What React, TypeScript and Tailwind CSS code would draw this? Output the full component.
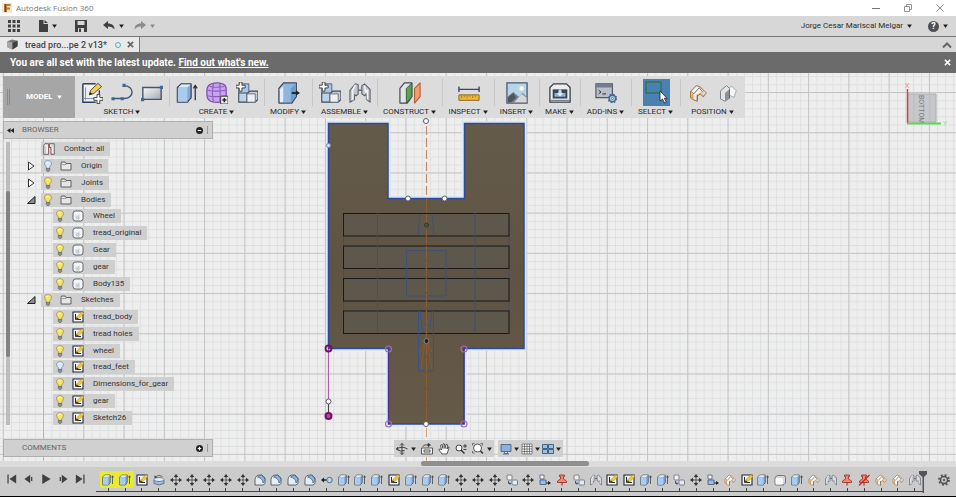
import React from "react";

type IconProps = { className?: string };

const blue = "#a9c8e8";
const ink = "#3f4a59";

const Caret = ({ className = "text-[#222]" }: IconProps) => (
  <svg viewBox="0 0 6 5" className={`h-1 w-[5px] shrink-0 ${className}`}>
    <path d="M0 0.5h6L3 5z" fill="currentColor" />
  </svg>
);

/* SHARED FEATURE ICONS */
const Extrude = ({ className }: IconProps) => (
  <svg viewBox="0 0 24 24" className={className} strokeLinejoin="round">
    <path d="M1.500 6 5.500 2h11v15l-4 5h-11z" fill="#7fa9d6" stroke={ink} strokeWidth="1.400" />
    <path d="M2 6.500h10.500v15H2z" fill="#a9cbec" />
    <path d="M2.500 6 5.800 2.700h10L12.500 6z" fill="#dcebf8" />
    <path d="M21 20V4M19 7l2-3.500L23 7" fill="none" stroke="#333" strokeWidth="1.400" />
  </svg>
);

const SketchSmall = ({ className }: IconProps) => (
  <svg viewBox="0 0 24 24" className={className}>
    <path d="M2 2h20v20H2z" fill="#f4f4f2" stroke="#1f2937" strokeWidth="2.200" />
    <path d="M7 6v11h11" fill="none" stroke="#1f2937" strokeWidth="2" />
    <path d="m8 17 2-6 10-10 4 4-10 10z" fill="#f0c93a" stroke="#8d6d1c" strokeWidth=".8" />
    <path d="m8 17 1.500-4.500 3 3z" fill="#222" />
  </svg>
);

const SketchBig = ({ className }: IconProps) => (
  <svg viewBox="0 0 24 24" className={className}>
    <path d="M3 3h18v18H3z" fill="#f1f1f1" />
    <path d="M2 2v20h14M2 2h14M20 9v4" fill="none" stroke="#34455c" strokeWidth="1.600" />
    <path d="M5 20V6M3 18h11" stroke="#7b8ba3" strokeWidth="1" />
    <path d="m9 14 1.500-5L18.500 1.500l4 3.500-8.500 7.500z" fill="#f2cf58" stroke="#4a4332" />
    <path d="m9 14 1-3 2.500 2z" fill="#222" />
    <path d="M17.500 13.500h3v3.500h3.500v3h-3.500v3.500h-3V20H14v-3h3.500z" fill="#fff" stroke="#333" />
  </svg>
);

const Polyline = ({ className }: IconProps) => (
  <svg viewBox="0 0 24 24" className={className}>
    <path d="M2 18h12M14 4c12 0 12 14 0 14" fill="none" stroke="#3c5478" strokeWidth="1.500" />
    <path d="M0.500 16.500H4V20H.5zM10.500 16.500H14V20h-3.500zM12.500 2H16v3.500h-3.500z" fill="#416798" />
  </svg>
);

const Rectangle = ({ className }: IconProps) => (
  <svg viewBox="0 0 24 24" className={className}>
    <defs>
      <linearGradient id="rectFill" x1="0" y1="0" x2="1" y2="1">
        <stop offset="0" stopColor="#fafafa" />
        <stop offset="1" stopColor="#a3a9b1" />
      </linearGradient>
    </defs>
    <path d="M2 6h20v13H2z" fill="url(#rectFill)" stroke="#44546c" strokeWidth="1.500" />
    <path d="M0 17.500h3.500V21H0zM20.500 4H24v3.500h-3.500z" fill="#416798" />
  </svg>
);

const Form = ({ className }: IconProps) => (
  <svg viewBox="0 0 24 24" className={className}>
    <path d="M6 2q6-2 12 0 4 1 4 6v8q-1 5-6 6-6 1-11-1-4-2-4-7V8q1-5 5-6z" fill="#c9a4ee" stroke="#7a50ae" strokeWidth="1.400" />
    <path d="M1.500 9q9 2 20 0M1.500 15q9 2 20 0M8 1.500q-2 10 0 20M15 1.500q1 10 0 20M4 5q8 1.500 16 0" fill="none" stroke="#8a5cc0" strokeWidth="1.200" />
    <path d="M16 15.500h8V24h-8z" fill="#eee" stroke="#333" />
    <path d="M20 17.500v4.500M17.800 19.700h4.500" stroke="#222" strokeWidth="1.600" />
  </svg>
);

const Component = ({ className }: IconProps) => (
  <svg viewBox="0 0 24 24" className={className} strokeLinejoin="round">
    <path d="M3 5 6 2h8v11H3z" fill={blue} stroke="#49617e" />
    <path d="M3 12h10v10H3z" fill="#bcd3ea" stroke={ink} strokeWidth="1.200" />
    <path d="m12 13 3-3h9v9l-3 3h-9z" fill="#c4cad2" stroke={ink} strokeWidth="1.200" />
    <path d="M12 13h9v9h-9z" fill="#eef0f2" stroke="#69737f" />
    <path d="M3.500 0h3v3.500H10v3H6.500V10h-3V6.500H0v-3h3.500z" fill="#fff" stroke="#333" />
  </svg>
);

const PressPull = ({ className }: IconProps) => (
  <svg viewBox="0 0 24 24" className={className} strokeLinejoin="round">
    <path d="M1 7 6 1h14v15l-5 7H1z" fill="#8fb6de" stroke={ink} strokeWidth="1.400" />
    <path d="M2 8q2-3 4-3v16l-1 1H2z" fill="#e4eef8" />
    <path d="M6 6q5-2 13-4.500V16l-5 6H6z" fill="#8db5e0" />
    <path d="m14 7 5-5.500V16l-5 6z" fill="#6c9bce" />
    <path d="M15 12h5" stroke="#222" strokeWidth="2" />
    <path d="m19.500 9 4.500 3-4.500 3z" fill="#222" />
  </svg>
);

const Joint = ({ className }: IconProps) => (
  <svg viewBox="0 0 24 24" className={className} strokeLinejoin="round">
    <path d="m1 9 6-7 3 1v10l-2 2-2-1v5l-5 3z" fill="#c3c6ca" stroke="#59626d" strokeWidth="1.200" />
    <path d="M7 3 4 9v11" fill="none" stroke="#f3f4f5" strokeWidth="1.800" />
    <path d="m23 8-6-6-3 2v9l3 2 2-2v6l4 3z" fill="#c3c6ca" stroke="#59626d" strokeWidth="1.200" />
    <path d="m17 4 1 7 2-2v10" fill="none" stroke="#f3f4f5" strokeWidth="1.600" />
    <path d="M10 9h4" stroke="#59626d" strokeWidth="1.500" />
  </svg>
);

const Plane = ({ className }: IconProps) => (
  <svg viewBox="0 0 24 24" className={className} strokeLinejoin="round">
    <path d="m1 7 5-6h8v15l-5 7H1z" fill="#e4e6e4" stroke={ink} strokeWidth="1.300" />
    <path d="m8 7 6-6v15l-6 7z" fill="#5f9e5b" stroke="#315f38" />
    <path d="m17 7 6-6v15l-6 7z" fill="#f0a06c" stroke="#b05f32" strokeWidth="1.200" />
  </svg>
);

const Measure = ({ className }: IconProps) => (
  <svg viewBox="0 0 24 24" className={className}>
    <path d="M1 5v6M23 5v6M1 8h22" stroke="#364a66" strokeWidth="1.500" />
    <path d="M1 14h22v6H1z" fill="#eeb737" stroke="#8a651b" />
    <path d="M4 14.500v3M7 14.500v2M10 14.500v3M13 14.500v2M16 14.500v3M19 14.500v2" stroke="#a27a22" />
  </svg>
);

const Picture = ({ className }: IconProps) => (
  <svg viewBox="0 0 24 24" className={className}>
    <path d="M1 1h22v22H1z" fill="#b4d5ea" stroke="#49596b" strokeWidth="1.400" />
    <circle cx="17" cy="7" r="2.500" fill="#fff9df" />
    <path d="M1.700 16 8 11l6 5 4-4 4.500 4v6.500H1.700z" fill="#79828c" />
    <path d="M9 22 17 13l5.300 4v5z" fill="#d5d8db" />
    <path d="M2 22v-5l6-5 3 5-5 5z" fill="#4d5660" />
  </svg>
);

const Printer3D = ({ className }: IconProps) => (
  <svg viewBox="0 0 24 24" className={className} strokeLinejoin="round">
    <path d="m1 6 4-4h14l4 4v16H1z" fill="#eceeef" stroke="#333d49" strokeWidth="1.400" />
    <path d="M4 8h16v10H4z" fill="#3d4651" />
    <path d="M6 16v-4h4V9h4v3h4v4z" fill="#8ab5dc" />
    <path d="M12 8v6M9.500 12l2.500 3 2.500-3" fill="none" stroke="#fff" strokeWidth="1.200" />
    <path d="M2 20h20" stroke="#59636f" />
  </svg>
);

const Script = ({ className }: IconProps) => (
  <svg viewBox="0 0 24 24" className={className}>
    <path d="M1 2h18v15H1z" fill="#b9bec8" stroke="#4f5866" strokeWidth="1.300" />
    <path d="M1 2h18v4H1z" fill="#737d8e" />
    <path d="m4 9 2.500 2L4 13M8 13h4" fill="none" stroke="#222" />
    <circle cx="19" cy="18" r="3.500" fill="#b2d0ec" stroke="#41699a" strokeWidth="1.500" />
    <circle cx="19" cy="18" r="4.500" fill="none" stroke="#41699a" strokeWidth="1.500" strokeDasharray="1.800 1.740" />
    <circle cx="19" cy="18" r="1.200" fill="#fff" stroke="#41699a" strokeWidth=".8" />
  </svg>
);

const SelectCursor = ({ className }: IconProps) => (
  <svg viewBox="0 0 27 27" className={className}>
    <path d="M3 3h15v11H3z" fill="none" stroke="#2f7a57" strokeWidth="1.500" />
    <path d="M17 12v10l2.500-2 2 4 1.800-1-2-3.700H24z" fill="#fff" stroke="#222" strokeWidth=".8" />
  </svg>
);

const Position = ({ className }: IconProps) => (
  <svg viewBox="0 0 24 24" className={className} strokeLinejoin="round">
    <path d="m2 10 8-8 5 2 8 8-4 5-4-4-4 3v7l-5-2-4-3z" fill="#f6f2ec" stroke="#b07a4a" strokeWidth="1.400" />
    <path d="m2.500 10 4 3 7-8 6 7" fill="none" stroke="#6b6e72" strokeWidth="1.300" />
    <path d="m3 12 3 2v7l-3-2z" fill="#e99a45" />
    <path d="M11 14v8" stroke="#6b6e72" strokeWidth="1.300" />
    <path d="m15 12 4 4 4-4-3-3z" fill="#d9dcde" stroke="#c98a4e" />
  </svg>
);

const Revert = ({ className }: IconProps) => (
  <svg viewBox="0 0 24 24" className={className} strokeLinejoin="round">
    <path d="m2 9 8-7 4 4v13l-6 4-6-3z" fill="#e2e3e4" stroke="#747a80" strokeWidth="1.200" />
    <path d="m8 12 6-5v12l-6 4z" fill="#8b9198" />
    <path d="m14 5 3-2 6 6-3 9-6-3z" fill="#f5f5f5" stroke="#8d9399" />
    <path d="M14 7v12" stroke="#555" />
  </svg>
);

const Move = ({ className }: IconProps) => (
  <svg viewBox="0 0 24 24" className={className}>
    <path d="M12 3v6M12 15v6M3 12h6M15 12h6" stroke="#333" strokeWidth="2.200" />
    <path d="m12 0 4.500 6h-9zM12 24l-4.500-6h9zM0 12l6-4.500v9zM24 12l-6 4.500v-9z" fill="#333" />
    <path d="M10.500 10.500h3v3h-3z" fill="#333" />
  </svg>
);

const Fillet = ({ className }: IconProps) => (
  <svg viewBox="0 0 24 24" className={className} strokeLinejoin="round">
    <path d="M2 22V11Q3 2 12 2h4l6 6v11l-4 3z" fill="#e7edf3" stroke={ink} strokeWidth="1.600" />
    <path d="M7 6q3-3 8-3 7 3 7 9l-4 6q0-9-11-12z" fill="#8fb5df" stroke="#3f5f85" strokeWidth="1.400" />
  </svg>
);

const Revolve = ({ className }: IconProps) => (
  <svg viewBox="0 0 24 24" className={className}>
    <path d="M2 12v7q10 6 20 0v-7z" fill="#98bee3" stroke="#435c79" strokeWidth="1.400" />
    <ellipse cx="12" cy="11" rx="10" ry="4" fill="#e5eef6" stroke="#435c79" strokeWidth="1.400" />
    <path d="M4 6q8-6 15-1" fill="none" stroke="#444" strokeWidth="1.500" />
    <path d="M3 2v6h5z" fill="#444" />
  </svg>
);

const JointOrigin = ({ className }: IconProps) => (
  <svg viewBox="0 0 24 24" className={className}>
    <path d="M0 12l6-5v3.500h5v3H6V17z" fill="#222" />
    <circle cx="17" cy="12" r="5.500" fill="#bcd4ec" stroke="#4b6e98" strokeWidth="2" />
  </svg>
);

const Copy = ({ className }: IconProps) => (
  <svg viewBox="0 0 24 24" className={className}>
    <rect x="2" y="2" width="10" height="10" rx="2" fill="#f0f1f2" stroke="#596675" strokeWidth="1.500" />
    <rect x="12" y="12" width="11" height="10" rx="2" fill="#e6eaee" stroke="#596675" strokeWidth="1.500" />
    <path d="M5 14v5h3" fill="none" stroke="#2f6299" strokeWidth="2" />
    <path d="m7 16 4 3-4 3z" fill="#2f6299" />
  </svg>
);

const Align = ({ className }: IconProps) => (
  <svg viewBox="0 0 24 24" className={className}>
    <path d="M2 2h8v8H2z" fill="#f2f3f4" stroke="#4a5a6c" strokeWidth="1.500" />
    <path d="M2 12h12v9H2z" fill="#9abfe4" stroke="#36506f" strokeWidth="1.500" />
    <path d="M14 18h5" stroke="#222" strokeWidth="2" />
    <path d="m18 14 6 4-6 4z" fill="#222" />
  </svg>
);

const Pin = ({ className }: IconProps) => (
  <svg viewBox="0 0 24 24" className={className} strokeLinejoin="round">
    <path d="M7 2h10v3h-2v5l6 4v3H3v-3l6-4V5H7z" fill="#e98c74" stroke="#a83224" strokeWidth="1.800" />
    <path d="M12 17v6" stroke="#7c2a20" strokeWidth="2" />
  </svg>
);

const Unpin = ({ className }: IconProps) => (
  <svg viewBox="0 0 24 24" className={className} strokeLinejoin="round">
    <path d="M7 2h10v3h-2v5l6 4v3H3v-3l6-4V5H7z" fill="#e98c74" stroke="#a83224" strokeWidth="1.800" />
    <path d="M12 17v6" stroke="#7c2a20" strokeWidth="2" />
    <path d="M2 23 23 2" stroke="#d41f1f" strokeWidth="2.500" />
  </svg>
);

const Box = ({ className }: IconProps) => (
  <svg viewBox="0 0 24 24" className={className}>
    <path d="M2 9q0-3 3-5l2-1h12q4 0 4 4v9q0 3-3 5l-2 1H5q-3 0-3-3z" fill="#d2d6da" stroke="#48525e" strokeWidth="1.400" />
    <rect x="3" y="8" width="15" height="13" rx="3" fill="#f7f8f8" />
  </svg>
);

/* BROWSER ICONS */
const Bulb = ({ off }: { off?: boolean }) => (
  <svg viewBox="0 0 16 24" className="h-3 w-2">
    <path d="M8 1.500c9 0 8 8 3.500 12v3h-7v-3C0 9.500-1 1.500 8 1.500z" fill={off ? "#dbe9f8" : "#f6e66c"} stroke={off ? "#6d8cb5" : "#a08d30"} strokeWidth="1.500" />
    <path d="M5 6q2-3 4-2" fill="none" stroke="#fff" strokeWidth="2" />
    <path d="M4.500 17h7v4l-2 2h-3l-2-2z" fill="#8b8f94" stroke="#4e5257" />
  </svg>
);

const Folder = () => (
  <svg viewBox="0 0 24 20" className="h-[10px] w-3">
    <path d="M2 18V5l1-3h7l2 3h10v13z" fill="#e6e6e6" stroke="#3e444a" strokeWidth="1.600" strokeLinejoin="round" />
    <path d="M3 7h9l2-2" fill="none" stroke="#777d83" strokeWidth="1.300" />
  </svg>
);

const Body = () => (
  <svg viewBox="0 0 24 24" className="h-3 w-3">
    <rect x="2" y="2" width="20" height="20" rx="5" fill="#f5f5f5" stroke="#4a5059" strokeWidth="1.700" />
    <path d="M7 11h7v8H7z" fill="#ccd3dc" />
    <path d="M14 9v10" stroke="#98a0ab" />
  </svg>
);

const Contact = () => (
  <svg viewBox="0 0 24 24" className="h-3 w-3">
    <path d="M1.500 4 4 1.500h7v21H1.500zM13 1.500h9.500v21H16V9h-3z" fill="#f4eeee" stroke="#3d3d42" strokeWidth="1.500" />
    <path d="M11 2v20M13 2v8" stroke="#c8595c" strokeWidth="1.200" />
    <path d="M5 6v15M18 9V4" stroke="#999" />
  </svg>
);

const toolGroups = [
  { label: "SKETCH", width: "w-[94px]", gap: "gap-2", icons: [SketchBig, Polyline, Rectangle] },
  { label: "CREATE", width: "w-[95px]", gap: "gap-2", icons: [Extrude, Form, Component] },
  { label: "MODIFY", width: "w-[48px]", gap: "gap-2", icons: [PressPull] },
  { label: "ASSEMBLE", width: "w-[65px]", gap: "gap-2", icons: [Component, Joint] },
  { label: "CONSTRUCT", width: "w-[65px]", gap: "gap-2", icons: [Plane] },
  { label: "INSPECT", width: "w-[52px]", gap: "gap-2", icons: [Measure] },
  { label: "INSERT", width: "w-[45px]", gap: "gap-2", icons: [Picture] },
  { label: "MAKE", width: "w-[41px]", gap: "gap-2", icons: [Printer3D] },
  { label: "ADD-INS", width: "w-[51px]", gap: "gap-2", icons: [Script] },
  { label: "SELECT", width: "w-[49px]", gap: "gap-2", icons: [SelectCursor] },
  { label: "POSITION", width: "w-[65px]", gap: "gap-3", icons: [Position, Revert] },
];

type Node = { name: string; kind: "contact" | "folder" | "body" | "sketch"; open?: boolean; off?: boolean };

const tree: Node[] = [
  { name: "Contact: all", kind: "contact" },
  { name: "Origin", kind: "folder", off: true },
  { name: "Joints", kind: "folder" },
  { name: "Bodies", kind: "folder", open: true },
  { name: "Wheel", kind: "body" },
  { name: "tread_original", kind: "body" },
  { name: "Gear", kind: "body" },
  { name: "gear", kind: "body" },
  { name: "Body135", kind: "body" },
  { name: "Sketches", kind: "folder", open: true },
  { name: "tread_body", kind: "sketch" },
  { name: "tread holes", kind: "sketch" },
  { name: "wheel", kind: "sketch" },
  { name: "tread_feet", kind: "sketch", off: true },
  { name: "Dimensions_for_gear", kind: "sketch" },
  { name: "gear", kind: "sketch" },
  { name: "Sketch26", kind: "sketch" },
];

const features = [
  Extrude, Extrude, SketchSmall, Revolve, Move, Move, Move, Move, Move,
  Fillet, Fillet, Fillet, Fillet, JointOrigin, Extrude, Extrude, Extrude,
  SketchSmall, Extrude, Extrude, Extrude, Move, Move, Move, Copy, Move,
  Align, Pin, Copy, Joint, SketchSmall, SketchSmall, Extrude, Extrude, Copy,
  Move, Align, Position, SketchSmall, Extrude, Box, Extrude, Position, Joint,
  Pin, Unpin, Position, Position, Joint,
];

const playback = [
  { label: "Go to start", d: "M1 1v22h3V1zM22 1v22L6 12z" },
  { label: "Step back", d: "M15 2v20L1 12zM17 7h3v10h-3z" },
  { label: "Play", d: "M3 0v24l20-12z" },
  { label: "Step forward", d: "M9 2v20l14-10zM4 7h3v10H4z" },
  { label: "Go to end", d: "M20 1v22h3V1zM2 1v22l16-11z" },
];

/* MODEL DRAWING */
const Scene = () => (
  <svg className="absolute inset-0 h-full w-full" aria-hidden="true">
    <defs>
      <pattern id="minor" width="8.053" height="8.04" x="43.300" y="19.300" patternUnits="userSpaceOnUse">
        <path d="M0 .5h8.053M.5 0v8.04" stroke="#dedfe0" fill="none" />
      </pattern>
      <pattern id="major" width="40.267" height="40.200" x="43" y="19" patternUnits="userSpaceOnUse">
        <path d="M0 .5h40.267M.5 0v40.200" stroke="#c4c5c6" fill="none" />
      </pattern>
      <linearGradient id="wood" x1="0" y1="0" x2="0" y2="1">
        <stop offset="0" stopColor="#655b4a" />
        <stop offset=".5" stopColor="#5f5443" />
        <stop offset="1" stopColor="#655948" />
      </linearGradient>
    </defs>
    <rect width="100%" height="100%" fill="#eeeeee" />
    <rect width="100%" height="100%" fill="url(#minor)" />
    <rect width="100%" height="100%" fill="url(#major)" />
    <path d="M43.500 45v343" stroke="#e3a3a8" />
    <g transform="translate(0 -73)" fill="none">
      <path d="M328.500 123.500H388V198.500H464.500V123.500H524V348.500H464V424H388.500V348.500H328.500z" stroke="#dce8fa" strokeWidth="5" />
      <path d="M328.500 123.500H388V198.500H464.500V123.500H524V348.500H464V424H388.500V348.500H328.500z" fill="url(#wood)" stroke="#2d4a96" strokeWidth="1.500" />
      <path d="M343.500 213v120M509 213v120" stroke="#3c4c7c" />
      {[213.5, 246, 278.5, 311].map((y) => (
        <rect key={y} x="343.500" y={y} width="165.500" height="22.500" fill="#5d584b" stroke="#17191f" />
      ))}
      <path d="M377.500 213v120M475 213v120M406.500 250.500h39.500v45.500h-39.500zM420 214l-2 21M432 214l2 21" stroke="#3c4c7c" strokeWidth=".8" />
      <path d="M418.500 311v60h15V311M420 311l3 22M432 311l-3 22" stroke="#33508f" strokeWidth=".9" />
      <path d="m426 335-5 34M426 335l6 34M420 352l6-12 6 12" stroke="#8a5a30" strokeWidth=".9" />
      <path d="M388.500 348.500V424M464 348.500V424" stroke="#49328a" />
      <path d="M426.500 126v72" stroke="#c78a62" strokeWidth="1.200" strokeDasharray="9 3" />
      <path d="M426.500 198v226" stroke="#8e5c30" strokeDasharray="14 2" />
      <path d="M426.500 428v33" stroke="#d0a078" strokeDasharray="9 3" />
      <path d="M328.500 349v67" stroke="#b45cae" strokeWidth="1.200" />
      <path d="M328.500 404v12" stroke="#444" />
      <g fill="#fff" stroke="#555b66">
        <circle cx="426" cy="121" r="2.500" />
        <circle cx="408" cy="198.500" r="2.500" />
        <circle cx="444.500" cy="198.500" r="2.500" />
        <circle cx="426" cy="424" r="2.500" />
        <circle cx="328.500" cy="401.500" r="2.500" />
      </g>
      <circle cx="328.500" cy="145.500" r="2" fill="#dce3f3" stroke="#7587b8" />
      <circle cx="426.500" cy="225" r="2" fill="#55523a" stroke="#39382c" />
      <circle cx="426.500" cy="341" r="2.500" fill="#222" stroke="#8d8574" />
      <g stroke="#a76bb5" strokeWidth="1.200">
        <circle cx="388.500" cy="349" r="3" />
        <circle cx="464" cy="349" r="3" />
        <circle cx="388.500" cy="424" r="3" />
        <circle cx="464" cy="424" r="3" />
      </g>
      <circle cx="328.500" cy="348.500" r="3" stroke="#800c68" strokeWidth="1.800" />
      <circle cx="328.500" cy="416" r="3" fill="#a8508f" stroke="#800c68" strokeWidth="2" />
    </g>
  </svg>
);

const ViewCube = () => (
  <svg viewBox="0 0 48 48" className="absolute top-2 right-1 h-12 w-12">
    <path d="M4 13h28v28H4z" fill="#c6c8cc" stroke="#a9acb1" />
    <path d="M10 14v27M26 14v27" stroke="#b9bbc0" />
    <text x="-1" y="0" transform="translate(15 15) rotate(90)" fontSize="7" fill="#777b82" fontFamily="Roboto, sans-serif">BOTTOM</text>
    <path d="M3.500 8v34" stroke="#d8404a" strokeWidth="1.500" />
    <path d="M3 42.500h34" stroke="#5ed455" strokeWidth="2" />
    <text x="1" y="7" fontSize="7" fill="#f08a8a" fontFamily="Roboto, sans-serif">X</text>
    <text x="39" y="45" fontSize="7" fill="#8fe088" fontFamily="Roboto, sans-serif">Y</text>
  </svg>
);

const TreeRow = ({ node }: { node: Node }) => {
  const child = node.kind === "body" || node.kind === "sketch";
  return (
    <li className={`flex min-h-0 flex-1 items-center ${child ? "pl-[43px]" : node.kind === "folder" ? "pl-4" : "pl-[31px]"}`}>
      {node.kind === "folder" && (
        <button aria-label={`Expand ${node.name}`} className="mr-[5px] w-[10px]">
          <svg viewBox="0 0 20 20" className="h-[10px] w-[10px]">
            {node.open ? (
              <path d="M18 3v14H3z" fill="#8d8d8d" stroke="#222" strokeWidth="2" />
            ) : (
              <path d="M5 2v16l11-8z" fill="#fff" stroke="#333" strokeWidth="2" />
            )}
          </svg>
        </button>
      )}
      <div className="flex h-[14px] items-center bg-[#cfcfcf] pr-[6px]">
        {node.kind === "contact" ? (
          <span className="mr-[9px] ml-[2px]"><Contact /></span>
        ) : (
          <>
            <button aria-label={`Toggle ${node.name}`} className="ml-[3px] w-2">
              <Bulb off={node.off} />
            </button>
            <span className="mr-[9px] ml-2 w-3">
              {node.kind === "folder" && <Folder />}
              {node.kind === "body" && <Body />}
              {node.kind === "sketch" && <SketchSmall className="h-3 w-3" />}
            </span>
          </>
        )}
        <span className="text-[8px] leading-3 whitespace-nowrap text-[#333]">{node.name}</span>
      </div>
    </li>
  );
};

const App = () => {
  return (
    <div className="flex h-screen flex-col overflow-hidden border-b border-black bg-[#cbcbcb] font-['Roboto','Liberation_Sans',sans-serif] text-[#333]">
      {/* TITLE BAR */}
      <header className="flex h-4 shrink-0 items-center bg-white pr-3 pl-[2px]">
        <svg viewBox="0 0 20 20" className="h-[10px] w-[10px]">
          <path d="M0 0h20v20H0z" fill="#f1e6d8" />
          <path d="M5 2h12v4h-7v3h6v4h-6v5H5z" fill="#c8791f" />
          <path d="M5 2h3v16H5z" fill="#6e4318" />
        </svg>
        <h1 className="ml-1 flex-1 font-['Open_Sans',sans-serif] text-[8px] leading-3 text-[#777]">Autodesk Fusion 360</h1>
        <div className="flex items-center gap-6 text-[#777]">
          <button aria-label="Minimize">
            <svg viewBox="0 0 8 8" className="h-2 w-2"><path d="M0 4.500h8" stroke="currentColor" /></svg>
          </button>
          <button aria-label="Restore">
            <svg viewBox="0 0 8 8" className="h-2 w-2" fill="none" stroke="currentColor" strokeWidth=".8">
              <path d="M.5 2.500h5v5h-5zM2.500 2.500v-2h5v5h-2" />
            </svg>
          </button>
          <button aria-label="Close">
            <svg viewBox="0 0 8 8" className="h-2 w-2"><path d="m.5.5 7 7m0-7-7 7" stroke="currentColor" strokeWidth=".9" /></svg>
          </button>
        </div>
      </header>

      {/* QUICK ACCESS BAR */}
      <div className="flex h-[21px] shrink-0 items-center border-b border-[#777] bg-[#d7d7d7] pr-2 pl-2 text-[#404040]">
        <button aria-label="Data panel" className="mr-[18px]">
          <svg viewBox="0 0 12 12" className="h-3 w-3" fill="currentColor">
            <path d="M0 0h3v3H0zM4.500 0h3v3h-3zM9 0h3v3H9zM0 4.500h3v3H0zM4.500 4.500h3v3h-3zM9 4.500h3v3H9zM0 9h3v3H0zM4.500 9h3v3h-3zM9 9h3v3H9z" />
          </svg>
        </button>
        <button aria-label="File" className="mr-[18px] flex items-center gap-1">
          <svg viewBox="0 0 10 12" className="h-3 w-[10px]"><path d="M1 0h4.500v4H10v8H1zM6.500 0 10 3H6.500z" fill="currentColor" /></svg>
          <Caret />
        </button>
        <button aria-label="Save" className="mr-4">
          <svg viewBox="0 0 12 12" className="h-3 w-3">
            <path d="M0 0h12v12H0z" fill="currentColor" />
            <path d="M2.500 1h7v4h-7zM3 8h6v4H3z" fill="#d7d7d7" />
            <path d="M4 8.500h2V12H4z" fill="currentColor" />
          </svg>
        </button>
        <button aria-label="Undo" className="mr-[10px] flex items-center gap-1">
          <svg viewBox="0 0 12 10" className="h-[10px] w-3"><path d="M5 0v2.500c4 0 6.500 2 6.500 6C10 6.500 8 5.500 5 5.500V8L0 4z" fill="currentColor" /></svg>
          <Caret />
        </button>
        <button aria-label="Redo" className="flex items-center gap-1 text-[#8b8b8b]">
          <svg viewBox="0 0 12 10" className="h-[10px] w-3"><path d="M7 0v2.500c-4 0-6.500 2-6.500 6C2 6.500 4 5.500 7 5.500V8l5-4z" fill="currentColor" /></svg>
          <Caret className="text-[#8b8b8b]" />
        </button>
        <div className="flex-1" />
        <button className="mr-4 flex items-center gap-1 text-[8px] leading-3 text-[#2c2c2c]">
          Jorge Cesar Mariscal Melgar <Caret />
        </button>
        <button aria-label="Help" className="flex items-center gap-1">
          <span className="flex h-[11px] w-[11px] items-center justify-center rounded-full bg-[#505050] text-[9px] leading-[11px] font-bold text-white">?</span>
          <Caret />
        </button>
      </div>

      {/* DOCUMENT TABS */}
      <div className="flex h-[15px] shrink-0 items-stretch justify-between bg-[#d6d6d6]">
        <div className="flex items-center border-r border-[#777] bg-[#e9e9e9] pr-[5px] pl-[7px]">
          <svg viewBox="0 0 24 24" className="mr-[7px] h-[11px] w-[11px]">
            <path d="m1 5 10-4 12 3v12l-11 7L1 18z" fill="#777" />
            <path d="m1 5 11 3v15L1 18z" fill="#a6a6a6" />
            <path d="M12 8 23 4v12l-11 7z" fill="#414141" />
          </svg>
          <span className="text-[9px] leading-3 font-medium text-[#444]">tread pro...pe 2 v13*</span>
          <span className="mr-[6px] ml-2 h-[6px] w-[6px] rounded-full border border-[#5cb0b0]" />
          <button aria-label="Close tab">
            <svg viewBox="0 0 8 8" className="h-[7px] w-[7px]"><path d="m1 1 6 6m0-6L1 7" stroke="#666" strokeWidth="2" /></svg>
          </button>
        </div>
        <button aria-label="Collapse" className="pr-1">
          <svg viewBox="0 0 10 8" className="h-2 w-[10px]"><path d="m1 6.500 4-4 4 4" fill="none" stroke="#666" strokeWidth="2" /></svg>
        </button>
      </div>

      {/* UPDATE BANNER */}
      <div className="flex h-[21px] shrink-0 items-center bg-[#6b6b6b] pr-[5px] pl-[10px] text-[10px] leading-3 font-bold text-white">
        <p className="flex-1">
          You are all set with the latest update. <a href="#new" className="underline">Find out what's new.</a>
        </p>
        <button aria-label="Dismiss">
          <svg viewBox="0 0 8 8" className="h-[7px] w-[7px]"><path d="m1 1 6 6m0-6L1 7" stroke="#fff" strokeWidth="1.800" /></svg>
        </button>
      </div>

      {/* CANVAS */}
      <main className="relative min-h-0 flex-1">
        <Scene />
        <ViewCube />
        <div className="relative flex h-full flex-col pt-[3px] pb-1 pl-[3px]">
          <div className="flex h-[42px] w-fit shrink-0 bg-[#dcdcdc]">
            <button className="flex w-[72px] items-center gap-1 bg-[#a6a6a6] pl-1 text-[8px] leading-3 font-bold text-white">
              <span className="mr-3 h-4 w-[3px] border-x border-[#888]" />
              MODEL <Caret className="text-white" />
            </button>
            {toolGroups.map((group, idx) => (
              <div key={group.label} className={`flex flex-col items-center pt-[3px] ${group.width}`}>
                <div className={`flex h-[27px] w-full items-center justify-center ${group.gap} ${idx ? "border-l border-[#c8c8c8]" : ""}`}>
                  {group.icons.map((Icon, i) => (
                    <button key={i} aria-label={`${group.label} ${i + 1}`} className={group.label === "SELECT" ? "bg-[#4a80b2]" : ""}>
                      <Icon
                        className={
                          group.label === "SELECT" ? "h-[27px] w-[27px]" : group.label === "POSITION" ? "h-[18px] w-[18px]" : "h-[22px] w-[22px]"
                        }
                      />
                    </button>
                  ))}
                </div>
                <button className="flex items-center gap-[2px] text-[8px] leading-3 text-[#2b2b2b]">
                  {group.label} <Caret />
                </button>
              </div>
            ))}
          </div>

          <div className="mt-[3px] flex h-[18px] w-[210px] shrink-0 items-center border border-[#b0b0b0] bg-[#d0d0d0] pr-[2px] pl-[3px]">
            <button aria-label="Collapse browser" className="w-[15px]">
              <svg viewBox="0 0 14 10" className="h-[5px] w-[7px]"><path d="M7 0v10L0 5zM14 0v10L7 5z" fill="#222" /></svg>
            </button>
            <h2 className="flex-1 text-[8px] leading-3 text-[#666]">BROWSER</h2>
            <button aria-label="Browser options" className="mr-1">
              <svg viewBox="0 0 12 12" className="h-[7px] w-[7px]"><circle cx="6" cy="6" r="6" fill="#222" /><path d="M3 6h6" stroke="#fff" strokeWidth="2" /></svg>
            </button>
            <span className="h-2 w-[3px] border-l border-[#999]" />
          </div>

          <div className="mt-[2px] flex h-[285px] shrink-0">
            <div className="my-[1px] ml-[3px] w-1 bg-[#bdbdbd]">
              <div className="mt-[49px] h-[166px] w-1 rounded-full bg-[#828282]" />
            </div>
            <ul className="flex flex-col">
              {tree.map((node, idx) => (
                <TreeRow key={idx} node={node} />
              ))}
            </ul>
          </div>

          <div className="mt-auto grid grid-cols-[1fr_auto_1fr] items-end pr-[3px]">
            <div className="flex h-[18px] w-[210px] items-center border border-[#b0b0b0] bg-[#d0d0d0] pr-[2px] pl-[18px]">
              <h2 className="flex-1 text-[8px] leading-3 text-[#666]">COMMENTS</h2>
              <button aria-label="Add comment" className="mr-1">
                <svg viewBox="0 0 12 12" className="h-[7px] w-[7px]"><circle cx="6" cy="6" r="6" fill="#222" /><path d="M3 6h6M6 3v6" stroke="#fff" strokeWidth="2" /></svg>
              </button>
              <span className="h-2 w-[3px] border-l border-[#999]" />
            </div>
            {/* NAVIGATION BAR */}
            <div className="flex gap-1">
              <div className="flex h-[17px] items-center gap-[5px] bg-[#d0d0d0] px-[2px] text-[#333]">
                <button aria-label="Orbit" className="flex items-center gap-[3px]">
                  <svg viewBox="0 0 24 24" className="h-3 w-3" fill="none" stroke="currentColor" strokeWidth="1.800">
                    <path d="M12 1v22M1 12q11-7 22 0M1 12q9 7 16 3M8 5l4-4 4 4M8 19l4 4 4-4M4 8l-3 4 4 3" />
                  </svg>
                  <Caret />
                </button>
                <button aria-label="Look at">
                  <svg viewBox="0 0 24 24" className="h-3 w-3" fill="#f2f2f2" stroke="currentColor" strokeWidth="1.600">
                    <path d="M1 10h22v12H1zM6 14h12v4H6z" />
                    <path d="M3 7q4-5 12-3" fill="none" />
                    <path d="m14 1 5 3-5 3z" fill="currentColor" />
                  </svg>
                </button>
                <button aria-label="Pan">
                  <svg viewBox="0 0 24 24" className="h-3 w-3" fill="#fff" stroke="currentColor" strokeWidth="1.600" strokeLinejoin="round">
                    <path d="M8 22 2 14q0-3 3-2l2 2L5 5q1-3 3-1l2 7V2q2-2 3 0l1 9 2-8q2-2 3 1l-1 8 2-4q3-1 2 2l-4 12z" />
                  </svg>
                </button>
                <button aria-label="Zoom">
                  <svg viewBox="0 0 24 24" className="h-3 w-3" fill="none" stroke="currentColor" strokeWidth="1.800">
                    <circle cx="8" cy="10" r="6" fill="#fff" />
                    <path d="m12 14 7 7" strokeWidth="3" />
                    <path d="M16 6h8M20 2v8M17 13h6" />
                  </svg>
                </button>
                <button aria-label="Fit" className="flex items-center gap-[3px]">
                  <svg viewBox="0 0 24 24" className="h-3 w-3" fill="none" stroke="currentColor" strokeWidth="1.600">
                    <circle cx="11" cy="10" r="8" fill="#fff" />
                    <path d="m17 16 5 5" strokeWidth="3" />
                    <path d="M1 5V1h4M17 1h4v4M1 16v4h4" strokeWidth="1.200" />
                  </svg>
                  <Caret />
                </button>
              </div>
              <div className="flex h-[17px] items-center gap-[2px] bg-[#d0d0d0] px-[2px] text-[#333]">
                <button aria-label="Display settings" className="flex items-center gap-[2px]">
                  <svg viewBox="0 0 24 24" className="h-3 w-3" stroke="#3f5878" strokeWidth="1.600">
                    <path d="M2 3h20v14H2z" fill="#8bb1dc" />
                    <path d="M9 17h6v4H9zM6 22h12" fill="#ddd" />
                  </svg>
                  <Caret />
                </button>
                <button aria-label="Grid and snaps" className="flex items-center gap-[2px]">
                  <svg viewBox="0 0 24 24" className="h-3 w-3" fill="#f2f2f2" stroke="#555" strokeWidth="1.300">
                    <path d="M2 2h20v20H2zM2 7h20M2 12h20M2 17h20M7 2v20M12 2v20M17 2v20" />
                  </svg>
                  <Caret />
                </button>
                <button aria-label="Viewports" className="flex items-center gap-[2px]">
                  <svg viewBox="0 0 24 24" className="h-3 w-3" fill="#9dc0e4" stroke="#35567e" strokeWidth="1.800">
                    <path d="M1 3h10v8H1zM13 3h10v8H13zM1 13h10v8H1zM13 13h10v8H13z" />
                  </svg>
                  <Caret />
                </button>
              </div>
            </div>
          </div>
        </div>
      </main>

      {/* TIMELINE */}
      <footer className="shrink-0">
        <div className="h-[6px] bg-[#dcdcdc]">
          <div className="ml-[44%] h-[5px] w-[168px] rounded-full bg-[#8f8f8f]" />
        </div>
        <div className="flex h-[29px] items-start pt-1 pr-[6px] pl-[7px]">
          <div className="flex w-[89px] shrink-0 gap-[7px] pt-[3px] text-[#404040]">
            {playback.map((item) => (
              <button key={item.label} aria-label={item.label}>
                <svg viewBox="0 0 24 24" className="h-[10px] w-[10px]"><path d={item.d} fill="currentColor" /></svg>
              </button>
            ))}
          </div>
          <div className="mt-[20px] w-1 border-b border-dashed border-[#444]" />
          <div className="flex flex-1">
            {features.map((Icon, idx) => (
              <div key={idx} className="flex flex-1 flex-col items-center border-b border-[#444]">
                <button aria-label={`Feature ${idx + 1}`} className={`flex h-[17px] w-full items-center justify-center ${idx < 2 ? "bg-[#e8ea35]" : ""}`}>
                  <Icon className="h-3 w-3" />
                </button>
                <span className="h-[3px] w-px bg-[#444]" />
              </div>
            ))}
          </div>
          <svg viewBox="0 0 8 22" className="-ml-1 h-[22px] w-2"><path d="M0 0h8v3L5 6v16H3.500V6L0 3z" fill="#555" /></svg>
          <button aria-label="Timeline settings" className="mt-[3px] ml-[11px]">
            <svg viewBox="0 0 24 24" className="h-3 w-3" fill="none" stroke="#505050">
              <circle cx="12" cy="12" r="7" strokeWidth="3" />
              <circle cx="12" cy="12" r="10" strokeWidth="3.500" strokeDasharray="3.900 3.950" />
              <circle cx="12" cy="12" r="2" fill="#505050" />
            </svg>
          </button>
        </div>
      </footer>
    </div>
  );
};

export default App;
